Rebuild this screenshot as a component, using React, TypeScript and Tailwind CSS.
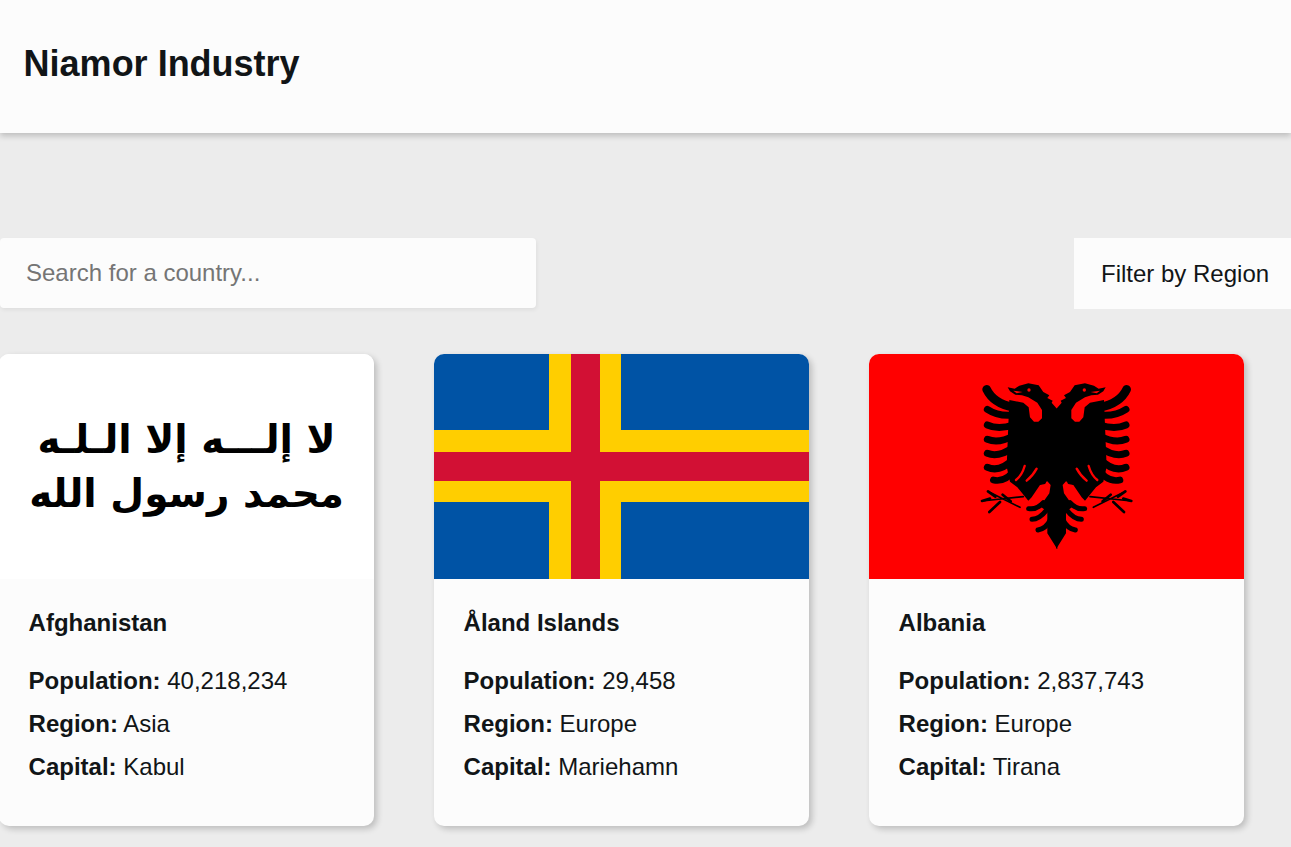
const countries = [
  { name: "Afghanistan", population: "40,218,234", region: "Asia", capital: "Kabul", flag: <AfghanFlag /> },
  { name: "Åland Islands", population: "29,458", region: "Europe", capital: "Mariehamn", flag: <AlandFlag /> },
  { name: "Albania", population: "2,837,743", region: "Europe", capital: "Tirana", flag: <AlbaniaFlag /> },
];

function AfghanFlag() {
  return (
    <div
      dir="rtl"
      lang="ar"
      className="flex h-full w-full flex-col items-center justify-center overflow-hidden bg-white text-[39px] font-bold leading-[54px] text-black [font-family:'DejaVu_Sans',sans-serif]"
    >
      <span className="whitespace-nowrap">لا إلـــه إلا الـلـه</span>
      <span className="whitespace-nowrap">محمد رسول الله</span>
    </div>
  );
}

function AlandFlag() {
  return (
    <svg viewBox="0 0 375 225" className="block h-full w-full">
      <rect width="375" height="225" fill="#0053a5" />
      <rect x="115" width="72" height="225" fill="#ffce00" />
      <rect y="76" width="375" height="72" fill="#ffce00" />
      <rect x="137" width="29" height="225" fill="#d21034" />
      <rect y="98" width="375" height="29" fill="#d21034" />
    </svg>
  );
}

function EagleHalf() {
  return (
    <g>
      {/* head, neck, wing block, leg and tail */}
      <path d="M292 118 L275 98 L278 92 L262 84 L268 76 L250 66 L236 46 L205 40 L178 47 L164 56 L143 52 L150 64 L166 74 L186 76 L205 82 L232 98 L246 120 L246 145 L235 155 L222 155 L210 142 L206 112 L190 98 L148 90 L140 290 L150 335 L172 352 L205 392 L215 382 L240 345 L262 334 L272 345 L268 370 L250 395 L235 405 L262 425 L262 490 L292 538 Z" />
      <circle cx="207" cy="60" r="5" fill="#ff0000" />
      <path d="M160 62 L188 66 L170 70 Z" fill="#ff0000" />
      {/* wing feathers */}
      <g fill="none" stroke="#000" strokeLinecap="round">
        <path d="M80 58 Q100 100 160 112" strokeWidth="26" />
        <path d="M82 118 Q115 140 160 135" strokeWidth="21" />
        <path d="M82 165 Q115 180 160 165" strokeWidth="21" />
        <path d="M82 208 Q115 222 160 198" strokeWidth="21" />
        <path d="M82 250 Q115 264 160 232" strokeWidth="21" />
        <path d="M82 292 Q120 308 160 268" strokeWidth="21" />
        <path d="M100 330 Q140 340 175 285" strokeWidth="20" />
        <path d="M190 342 Q225 340 250 335" strokeWidth="16" />
        {/* tail feathers */}
        <path d="M206 416 Q230 420 250 398" strokeWidth="15" />
        <path d="M216 448 Q238 448 260 420" strokeWidth="15" />
        <path d="M234 480 Q258 476 272 448" strokeWidth="15" />
        {/* claws */}
        <path d="M66 393 L190 380 M92 368 L180 412" strokeWidth="5" />
        <path d="M66 393 L90 386 M88 426 L120 396 M84 364 L106 380 M128 374 L152 394" strokeWidth="8" />
      </g>
      {/* slits in the lower wing */}
      <g fill="none" stroke="#ff0000" strokeLinecap="round" strokeWidth="7">
        <path d="M168 330 Q186 316 194 288" />
        <path d="M200 332 Q218 318 230 296" />
        <path d="M102 350 Q130 352 150 345" strokeWidth="10" />
      </g>
    </g>
  );
}

function AlbaniaFlag() {
  return (
    <svg viewBox="0 0 375 225" className="block h-full w-full">
      <rect width="375" height="225" fill="#ff0000" />
      <g transform="translate(91 16) scale(0.3333)">
        <EagleHalf />
        <g transform="translate(580 0) scale(-1 1)">
          <EagleHalf />
        </g>
      </g>
    </svg>
  );
}

function CountryCard({ name, population, region, capital, flag }: (typeof countries)[number]) {
  return (
    <div className="h-[472px] w-[375px] shrink-0 overflow-hidden rounded-[10px] bg-[#fcfcfc] shadow-[3px_3px_6px_rgba(0,0,0,0.2)]">
      <div className="h-[225px]">{flag}</div>
      <div className="px-[29.6px] pt-[31px]">
        <h2 className="text-[24px] font-bold leading-[26px]">{name}</h2>
        <div className="mt-[32px] flex flex-col gap-[17px] text-[24px] leading-[26px]">
          <p>
            <b>Population:</b> {population}
          </p>
          <p>
            <b>Region:</b> {region}
          </p>
          <p>
            <b>Capital:</b> {capital}
          </p>
        </div>
      </div>
    </div>
  );
}

export default function App() {
  return (
    <div className="h-[847px] w-[1291px] overflow-hidden bg-[#ececec] text-[#111517] [font-family:'Liberation_Sans',Arial,sans-serif]">
      <header className="flex h-[133px] items-center bg-[#fcfcfc] pb-[6px] pl-[23.6px] shadow-[0_3px_6px_rgba(0,0,0,0.2)]">
        <h1 className="text-[36px] font-bold">Niamor Industry</h1>
      </header>

      <main className="pt-[105px]">
        <div className="flex items-start justify-between">
          <input
            placeholder="Search for a country..."
            className="h-[70px] w-[536px] rounded-[4px] bg-[#fcfcfc] pl-[26px] text-[24px] shadow-[1px_2px_4px_rgba(0,0,0,0.06)] outline-none placeholder:text-[#757575]"
          />
          <div className="flex h-[71px] w-[217px] items-center whitespace-nowrap bg-[#fcfcfc] pl-[27px] text-[24px]">
            Filter by Region
          </div>
        </div>

        <div className="-ml-px mt-[45px] flex gap-[60px]">
          {countries.map((c) => (
            <CountryCard key={c.name} {...c} />
          ))}
        </div>
      </main>
    </div>
  );
}
